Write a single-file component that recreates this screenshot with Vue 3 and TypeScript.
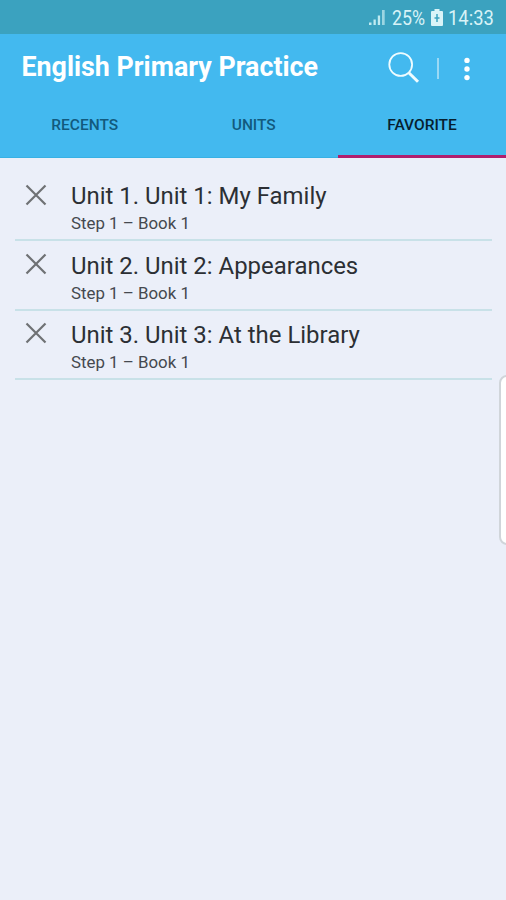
<script setup lang="ts">
interface Unit {
  title: string
  book: string
}

const tabs: string[] = ['Recents', 'Units', 'Favorite']
const activeTab = 'Favorite'

const favorites: Unit[] = [
  { title: 'Unit 1. Unit 1: My Family', book: 'Step 1 – Book 1' },
  { title: 'Unit 2. Unit 2: Appearances', book: 'Step 1 – Book 1' },
  { title: 'Unit 3. Unit 3: At the Library', book: 'Step 1 – Book 1' },
]
</script>

<template>
  <div class="screen">
    <div class="status">
      <svg class="signal" width="18" height="17" viewBox="0 0 18 17">
        <path d="M1 13.500h2.500V16H1zM5.500 10.500h2.300V16H5.500zM9.800 6.500h2.300V16H9.800z" fill="#c0eaf1" />
        <path d="M14 1h2.700v15H14z" fill="#9bd6e2" />
      </svg>
      <span class="percent">25%</span>
      <svg class="battery" width="12" height="18" viewBox="0 0 12 18">
        <path d="M3.500 0h5v2H11q1 0 1 1v13q0 1-1 1H1q-1 0-1-1V3q0-1 1-1h2.500z" fill="#d9f4f8" />
        <path d="M6 5v8M3.500 9h5" fill="none" stroke="#3ba2bf" stroke-width="1.500" />
      </svg>
      <span class="time">14:33</span>
    </div>

    <header class="appbar">
      <h1 class="heading">English Primary Practice</h1>
      <svg class="search" width="32" height="32" viewBox="0 0 32 32" fill="none" stroke="#effcff">
        <circle cx="12.700" cy="12.500" r="11.400" stroke-width="1.800" />
        <path d="M20.800 20.800L30 29.800" stroke-width="3" />
      </svg>
      <span class="separator"></span>
      <svg class="more" width="6" height="24" viewBox="0 0 6 24" fill="#fff">
        <circle cx="3" cy="3.400" r="2.700" />
        <circle cx="3" cy="12" r="2.700" />
        <circle cx="3" cy="20.600" r="2.700" />
      </svg>
    </header>

    <nav class="tabs">
      <div v-for="tab in tabs" :key="tab" class="tab" :class="{ active: tab === activeTab }">
        <span>{{ tab }}</span>
      </div>
    </nav>

    <main class="list">
      <article v-for="unit in favorites" :key="unit.title" class="row">
        <svg class="remove" width="22" height="22" viewBox="0 0 22 22">
          <path d="M1.500 1.500l19 19M20.500 1.500l-19 19" stroke="#6f7174" stroke-width="2.200" />
        </svg>
        <div class="info">
          <div class="title">{{ unit.title }}</div>
          <div class="book">{{ unit.book }}</div>
        </div>
      </article>
    </main>

    <div class="edge-handle"></div>
  </div>
</template>

<style>
body {
  margin: 0;
}
</style>

<style scoped>
.screen {
  position: relative;
  width: 506px;
  height: 900px;
  overflow: hidden;
  background: #ebeff9;
  font-family: Roboto, sans-serif;
}
.status {
  display: flex;
  box-sizing: border-box;
  height: 34px;
  padding-left: 368px;
  background: #3ba2bf;
  color: #d8f3f7;
  font-size: 20px;
  line-height: 36px;
  white-space: nowrap;
}
.signal {
  flex: none;
  margin-top: 9px;
}
.percent {
  width: 34px;
  margin-left: 5.500px;
  transform: scaleX(0.89);
  transform-origin: left;
}
.battery {
  flex: none;
  margin: 9px 0 0 5px;
}
.time {
  width: 46px;
  margin-left: 5.500px;
  transform: scaleX(0.92);
  transform-origin: left;
}
.appbar {
  display: flex;
  height: 66px;
  background: #43b9ef;
}
.heading {
  width: 366px;
  margin: 0;
  padding-left: 21.500px;
  padding-right: 0.500px;
  color: #fff;
  font-size: 26.800px;
  font-weight: 700;
  line-height: 67px;
  white-space: nowrap;
}
.search {
  flex: none;
  margin-top: 18px;
}
.separator {
  flex: none;
  width: 2px;
  height: 21px;
  margin: 24px 0 0 17px;
  background: #9bd9f5;
}
.more {
  flex: none;
  margin: 23px 0 0 25px;
}
.tabs {
  display: grid;
  grid-template-columns: 169.500px 168.500px 168px;
  height: 57.500px;
  background: #43b9ef;
}
.tab {
  box-sizing: border-box;
  border-bottom: 1px solid #38b1e4;
  color: #125a7d;
  font-size: 15.500px;
  font-weight: 500;
  line-height: 51px;
  text-align: center;
  text-transform: uppercase;
}
.tab.active {
  border-bottom: 3px solid #b01e6d;
  color: #06202f;
}
.list {
  padding: 14.500px 14px 0 15px;
}
.row {
  display: flex;
  box-sizing: border-box;
  height: 69.300px;
  padding-left: 10px;
  border-bottom: 2px solid #c8e1e8;
}
.remove {
  flex: none;
  margin-top: 11.500px;
}
.info {
  margin-left: 24px;
  padding-top: 9.300px;
  white-space: nowrap;
}
.title {
  color: #2c2f34;
  font-size: 23.950px;
  line-height: 30px;
}
.book {
  color: #45494f;
  font-size: 16.850px;
  line-height: 24px;
}
.edge-handle {
  position: absolute;
  top: 375px;
  left: 499px;
  box-sizing: border-box;
  width: 16px;
  height: 170px;
  border: 2px solid #d0d5da;
  border-radius: 8px;
  background: #fff;
}
</style>
